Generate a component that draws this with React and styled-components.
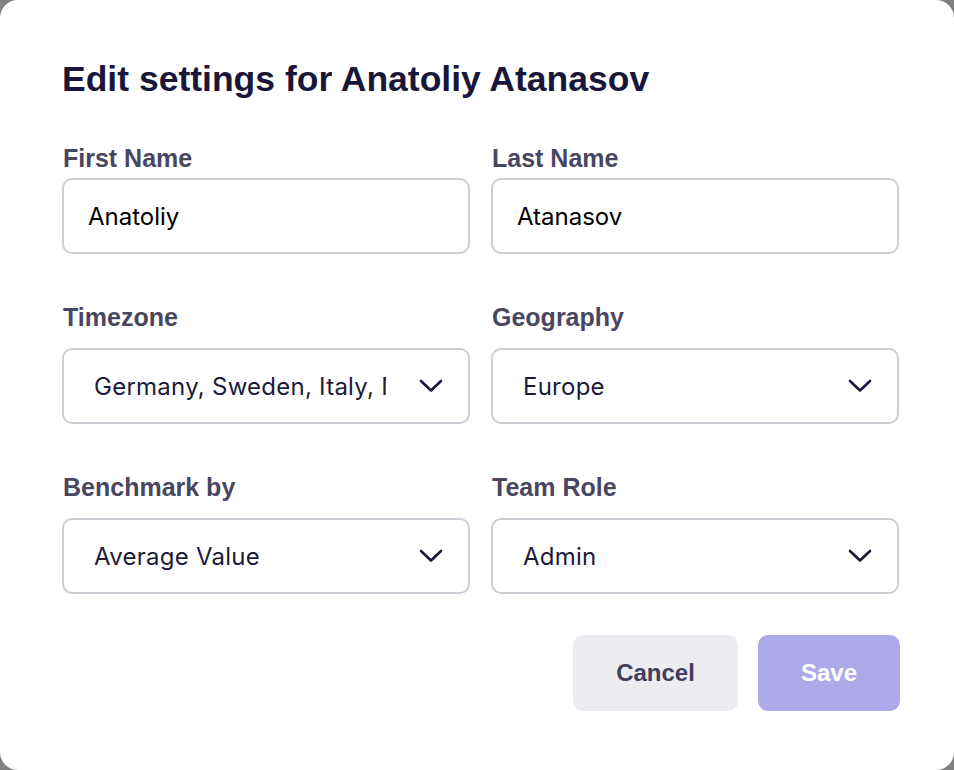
import React from "react";
import styled, { createGlobalStyle } from "styled-components";

const GlobalStyle = createGlobalStyle`
  html, body {
    margin: 0;
    padding: 0;
    background: #808080;
  }
  * {
    box-sizing: border-box;
  }
`;

const Modal = styled.div`
  width: 954px;
  height: 770px;
  background: #fff;
  border-radius: 18px;
  padding: 55px 54px 0 62px;
`;

const Title = styled.h1`
  margin: 0 0 42px;
  font-family: "Liberation Sans", Arial, sans-serif;
  font-weight: 700;
  font-size: 35.5px;
  line-height: 48px;
  color: #18173a;
`;

const Grid = styled.div`
  display: grid;
  grid-template-columns: 408px 408px;
  column-gap: 21px;
  row-gap: 50px;
`;

const Field = styled.div`
  display: flex;
  flex-direction: column;
  gap: 7px;
`;

const Label = styled.label`
  font-family: "Liberation Sans", Arial, sans-serif;
  font-weight: 700;
  font-size: 25px;
  line-height: 26px;
  color: #48475f;
  margin-left: 1px;
  margin-bottom: ${({ $select }) => ($select ? "11px" : "0")};
`;

const Box = styled.div`
  height: 76px;
  border: 2px solid #cfced6;
  border-radius: 10px;
  display: flex;
  align-items: center;
  justify-content: space-between;
  padding: ${({ $select }) => ($select ? "0 25px 0 30px" : "0 24px")};
  font-family: Inter, "Noto Sans", sans-serif;
  font-size: 24px;
  color: ${({ $select }) => ($select ? "#1c1b3a" : "#000")};
`;

const Value = styled.span`
  white-space: nowrap;
  overflow: hidden;
  letter-spacing: ${({ $select }) => ($select ? "0.25px" : "0")};
  flex: ${({ $clip }) => ($clip ? "0 0 292px" : "1")};
`;

const Actions = styled.div`
  display: flex;
  justify-content: flex-end;
  gap: 20px;
  margin-top: 41px;
`;

const Button = styled.button`
  height: 76px;
  width: ${({ $w }) => $w}px;
  border: none;
  border-radius: 10px;
  font-family: "Liberation Sans", Arial, sans-serif;
  font-weight: 700;
  font-size: 24px;
  background: ${({ $primary }) => ($primary ? "#aeaaea" : "#edecf1")};
  color: ${({ $primary }) => ($primary ? "#fff" : "#3f3e5c")};
`;

const Chevron = () => (
  <svg width="24" height="14" viewBox="0 0 24 14" fill="none">
    <polyline
      points="2,2 12,11.5 22,2"
      stroke="#18173a"
      strokeWidth="2.6"
      strokeLinecap="round"
      strokeLinejoin="round"
    />
  </svg>
);

const fields = [
  { label: "First Name", value: "Anatoliy" },
  { label: "Last Name", value: "Atanasov" },
  { label: "Timezone", value: "Germany, Sweden, Italy, Netherlands", select: true, clip: true },
  { label: "Geography", value: "Europe", select: true },
  { label: "Benchmark by", value: "Average Value", select: true },
  { label: "Team Role", value: "Admin", select: true },
];

export default function App() {
  return (
    <>
      <GlobalStyle />
      <Modal>
        <Title>Edit settings for Anatoliy Atanasov</Title>
        <Grid>
          {fields.map((f) => (
            <Field key={f.label}>
              <Label $select={f.select}>{f.label}</Label>
              <Box $select={f.select}>
                <Value $select={f.select} $clip={f.clip}>
                  {f.value}
                </Value>
                {f.select && <Chevron />}
              </Box>
            </Field>
          ))}
        </Grid>
        <Actions>
          <Button $w={165}>Cancel</Button>
          <Button $w={142} $primary>
            Save
          </Button>
        </Actions>
      </Modal>
    </>
  );
}
